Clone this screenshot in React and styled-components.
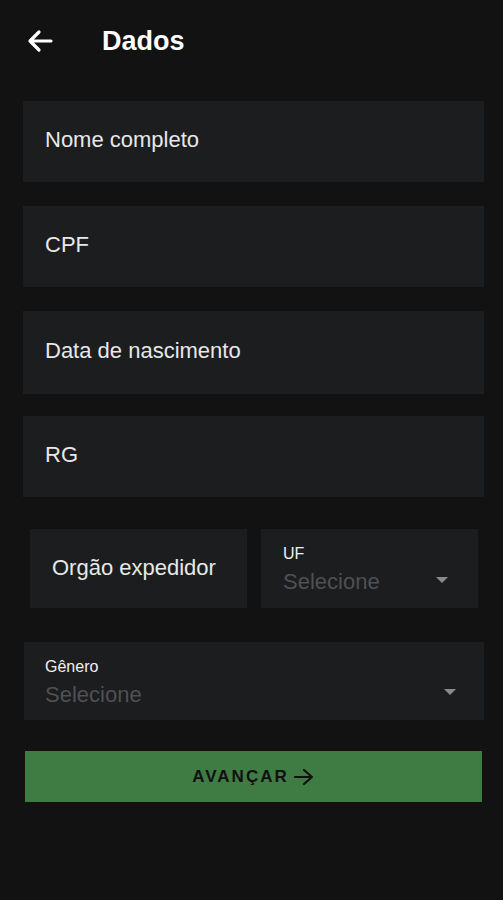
import React from "react";
import styled, { createGlobalStyle } from "styled-components";

const GlobalStyle = createGlobalStyle`
  *, *::before, *::after {
    box-sizing: border-box;
  }
  html, body {
    margin: 0;
    padding: 0;
    background-color: #121212;
    font-family: "Liberation Sans", Arial, sans-serif;
  }
`;

export default function App() {
  return (
    <Page>
      <GlobalStyle />
      <Header>
        <BackButton>
          <svg width="26" height="24" viewBox="0 0 26 24" fill="none">
            <path
              d="M24 12H3M12 3l-9 9 9 9"
              stroke="#ffffff"
              strokeWidth="3.2"
              strokeLinecap="round"
              strokeLinejoin="round"
            />
          </svg>
        </BackButton>
        <Title>Dados</Title>
      </Header>

      <Form>
        <Field>
          <Placeholder>Nome completo</Placeholder>
        </Field>
        <Field>
          <Placeholder>CPF</Placeholder>
        </Field>
        <Field tall>
          <Placeholder>Data de nascimento</Placeholder>
        </Field>
        <Field>
          <Placeholder>RG</Placeholder>
        </Field>

        <Row>
          <HalfField>
            <Placeholder>Orgão expedidor</Placeholder>
          </HalfField>
          <HalfSelect>
            <SelectText>
              <Label>UF</Label>
              <Value>Selecione</Value>
            </SelectText>
            <Caret />
          </HalfSelect>
        </Row>

        <Select>
          <SelectText>
            <Label>Gênero</Label>
            <Value>Selecione</Value>
          </SelectText>
          <Caret />
        </Select>

        <SubmitButton>
          AVANÇAR
          <svg width="22" height="18" viewBox="0 0 22 18" fill="none">
            <path
              d="M2 9h17M11 2l8 7-8 7"
              stroke="#111111"
              strokeWidth="2.2"
              strokeLinecap="round"
              strokeLinejoin="round"
            />
          </svg>
        </SubmitButton>
      </Form>
    </Page>
  );
}

const Page = styled.div`
  width: 503px;
  min-height: 900px;
  background-color: #121212;
`;

const Header = styled.div`
  display: flex;
  align-items: center;
  height: 82px;
  padding-left: 27px;
`;

const BackButton = styled.div`
  display: flex;
  align-items: center;
  width: 26px;
  height: 24px;
  margin-right: 49px;
`;

const Title = styled.h1`
  margin: 0;
  color: #ffffff;
  font-size: 27px;
  font-weight: bold;
`;

const Form = styled.div`
  display: flex;
  flex-direction: column;
  margin-top: 19px;
  padding: 0 19px 0 23px;
`;

const Field = styled.div`
  display: flex;
  align-items: center;
  height: ${(props) => (props.tall ? "83px" : "81px")};
  margin-bottom: ${(props) => (props.tall ? "22px" : "24px")};
  padding: 0 22px 4px 22px;
  background-color: #1c1d1f;
`;

const Placeholder = styled.span`
  color: #e8e8e8;
  font-size: 22px;
`;

const Row = styled.div`
  display: grid;
  grid-template-columns: 1fr 1fr;
  gap: 14px;
  margin-top: 8px;
  padding: 0 6px 0 7px;
`;

const HalfField = styled.div`
  display: flex;
  align-items: center;
  height: 79px;
  padding: 0 22px 2px 22px;
  background-color: #1c1d1f;
`;

const HalfSelect = styled.div`
  display: flex;
  align-items: center;
  justify-content: space-between;
  height: 79px;
  padding: 0 30px 0 22px;
  background-color: #1c1d1f;
`;

const Select = styled.div`
  display: flex;
  align-items: center;
  justify-content: space-between;
  height: 78px;
  margin: 34px 0 0 1px;
  padding: 0 28px 0 21px;
  background-color: #1c1d1f;
`;

const SelectText = styled.div`
  display: flex;
  flex-direction: column;
  margin-top: 3px;
`;

const Label = styled.span`
  color: #f0f0f0;
  font-size: 16px;
  line-height: 20px;
`;

const Value = styled.span`
  margin-top: 4px;
  color: #4f5053;
  font-size: 22px;
  line-height: 28px;
`;

const Caret = styled.div`
  width: 0;
  height: 0;
  margin-top: 22px;
  border-left: 6px solid transparent;
  border-right: 6px solid transparent;
  border-top: 6px solid #8a8b8d;
`;

const SubmitButton = styled.button`
  display: flex;
  align-items: center;
  justify-content: center;
  gap: 4px;
  height: 51px;
  margin: 31px 2px 0 2px;
  border: none;
  background-color: #3e7c43;
  color: #111111;
  font-family: "Liberation Sans", Arial, sans-serif;
  font-size: 17px;
  font-weight: bold;
  letter-spacing: 2px;
  cursor: pointer;
`;
